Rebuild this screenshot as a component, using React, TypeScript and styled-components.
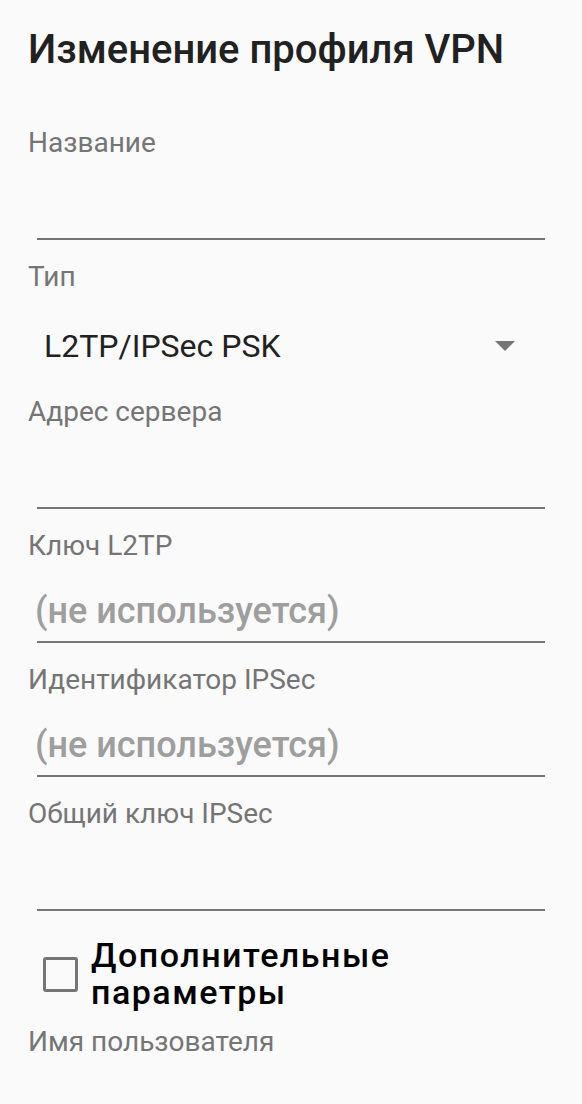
import React, { useState } from 'react';
import styled, { createGlobalStyle } from 'styled-components';

const GlobalStyle = createGlobalStyle`
  html, body {
    margin: 0;
    padding: 0;
    background: #fafafa;
    overflow: hidden;
  }
  body {
    font-family: Roboto, "Noto Sans", "Liberation Sans", sans-serif;
  }
`;

const Page = styled.div`
  display: flex;
  flex-direction: column;
  padding: 26px 37px 0 28px;
  height: 1104px;
  box-sizing: border-box;
  overflow: hidden;
`;

const Title = styled.h1`
  margin: 0 0 52px;
  flex: none;
  font-size: 40px;
  line-height: 48px;
  font-weight: 500;
  color: #212121;
`;

const Field = styled.div`
  display: flex;
  flex-direction: column;
  flex: none;
  margin-bottom: 20px;
`;

const Label = styled.div`
  font-size: 28px;
  line-height: 34px;
  color: #757575;
`;

const Input = styled.div`
  display: flex;
  align-items: flex-end;
  height: 80px;
  margin-left: 9px;
  padding-bottom: 9px;
  box-sizing: border-box;
  border-bottom: 2px solid #757575;
`;

const Hint = styled.span`
  font-size: 36px;
  line-height: 42px;
  font-weight: 500;
  color: #9e9e9e;
  margin-left: -2px;
`;

const Spinner = styled.div`
  display: flex;
  align-items: center;
  justify-content: space-between;
  height: 34px;
  padding: 35px 30px 12px 16px;
`;

const SpinnerValue = styled.span`
  font-size: 32px;
  line-height: 34px;
  color: #212121;
`;

const Arrow = styled.svg`
  width: 20px;
  height: 10px;
  fill: #757575;
`;

const CheckRow = styled.label`
  display: flex;
  align-items: center;
  flex: none;
  gap: 13px;
  margin: 6px 0 14px 15px;
  cursor: pointer;
`;

const Box = styled.span<{ $checked: boolean }>`
  width: 29px;
  height: 29px;
  flex: none;
  border: 3px solid ${({ $checked }) => ($checked ? '#009688' : '#757575')};
  background: ${({ $checked }) => ($checked ? '#009688' : 'transparent')};
  border-radius: 3px;
`;

const CheckText = styled.span`
  font-size: 34px;
  line-height: 37px;
  font-weight: 500;
  letter-spacing: 1.5px;
  color: #000;
`;

const App: React.FC = () => {
  const [advanced, setAdvanced] = useState(false);

  return (
    <>
      <GlobalStyle />
      <Page>
        <Title>Изменение профиля VPN</Title>

        <Field>
          <Label>Название</Label>
          <Input />
        </Field>

        <Field>
          <Label>Тип</Label>
          <Spinner>
            <SpinnerValue>L2TP/IPSec PSK</SpinnerValue>
            <Arrow viewBox="0 0 20 10">
              <path d="M0 0h20L10 10z" />
            </Arrow>
          </Spinner>
        </Field>

        <Field>
          <Label>Адрес сервера</Label>
          <Input />
        </Field>

        <Field>
          <Label>Ключ L2TP</Label>
          <Input>
            <Hint>(не используется)</Hint>
          </Input>
        </Field>

        <Field>
          <Label>Идентификатор IPSec</Label>
          <Input>
            <Hint>(не используется)</Hint>
          </Input>
        </Field>

        <Field>
          <Label>Общий ключ IPSec</Label>
          <Input />
        </Field>

        <CheckRow onClick={() => setAdvanced(!advanced)}>
          <Box $checked={advanced} />
          <CheckText>
            Дополнительные
            <br />
            параметры
          </CheckText>
        </CheckRow>

        <Field>
          <Label>Имя пользователя</Label>
          <Input />
        </Field>
      </Page>
    </>
  );
};

export default App;
